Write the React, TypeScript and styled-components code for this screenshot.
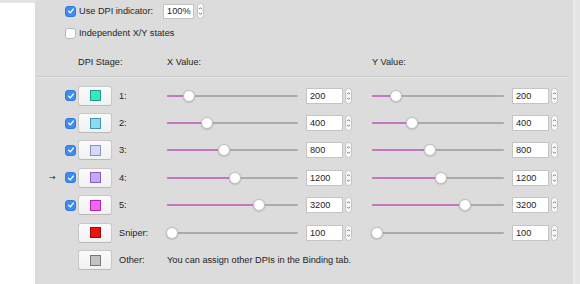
import React from 'react';
import styled, { createGlobalStyle } from 'styled-components';

interface IStage {
  id: string;
  label: string;
  color: string;
  border: string;
  x: number;
  y: number;
  xKnob: number;
  yKnob: number;
  enabled?: boolean;
  current?: boolean;
}

const stages: IStage[] = [
  { id: 's1', label: '1:', color: '#36e8bd', border: '#1f9c7c', x: 200, y: 200, xKnob: 22, yKnob: 24, enabled: true },
  { id: 's2', label: '2:', color: '#88dcf5', border: '#4a93ad', x: 400, y: 400, xKnob: 40, yKnob: 40, enabled: true },
  { id: 's3', label: '3:', color: '#d5d7fb', border: '#8b8fbd', x: 800, y: 800, xKnob: 57, yKnob: 58, enabled: true },
  { id: 's4', label: '4:', color: '#c8a6f8', border: '#8460b9', x: 1200, y: 1200, xKnob: 68, yKnob: 69, enabled: true, current: true },
  { id: 's5', label: '5:', color: '#f763f7', border: '#a82aa8', x: 3200, y: 3200, xKnob: 92, yKnob: 93, enabled: true },
];

const GlobalStyle = createGlobalStyle`
  html, body {
    margin: 0;
    padding: 0;
  }
  body {
    background: #e5e5e5;
    color: #242424;
    font-family: "Liberation Sans", Arial, sans-serif;
    font-size: 9.2px;
  }
`;

const Window = styled.div`
  display: flex;
  width: 580px;
  height: 284px;
  overflow: hidden;
`;

const Sidebar = styled.div`
  width: 35px;
  background: #fff;
  border-top: 3px solid #e3e3e3;
  box-sizing: border-box;
`;

const Panel = styled.div`
  flex: 1;
  background: #dcdcdc;
  display: flex;
  flex-direction: column;
`;

const Edge = styled.div`
  width: 5px;
  background: #e4e4e4;
  border-left: 2px solid #e9e9e9;
`;

const OptionRow = styled.div`
  display: flex;
  align-items: center;
  height: 22px;
  padding-left: 30px;
  gap: 3px;
`;

const Check = styled.span<{ $on?: boolean }>`
  width: 11px;
  height: 11px;
  box-sizing: border-box;
  border-radius: 3px;
  display: inline-flex;
  align-items: center;
  justify-content: center;
  background: ${p => (p.$on ? '#3d8bf5' : '#fff')};
  border: 1px solid ${p => (p.$on ? '#3179e0' : '#b9b9b9')};
`;

const PercentBox = styled.span`
  margin-left: 7px;
  width: 31px;
  height: 15px;
  box-sizing: border-box;
  background: #fff;
  border: 1px solid #c4c4c4;
  padding-left: 3px;
  display: inline-flex;
  align-items: center;
`;

const StageGrid = styled.div<{ $height?: number }>`
  display: grid;
  grid-template-columns: 17px 13px 41px 48px 139px 39px 27px 140px 39px 7px;
  align-items: center;
  height: ${p => p.$height || 27.4}px;
  padding-left: 13px;
`;

const HeaderRow = styled(StageGrid)`
  margin-top: 7px;
`;

const Separator = styled.div`
  height: 1px;
  background: #c9c9c9;
  border-bottom: 1px solid #e8e8e8;
  margin: 3px 5px 4px 2px;
`;

const HeaderCell = styled.span<{ $span?: number }>`
  grid-column: span ${p => p.$span || 1};
`;

const Arrow = styled.span`
  padding-left: 1px;
  font-family: "DejaVu Sans", sans-serif;
  font-size: 8px;
`;

const SwatchButton = styled.span`
  width: 34px;
  height: 20px;
  box-sizing: border-box;
  border-radius: 3px;
  border: 1px solid #c8c8c8;
  border-bottom-color: #b9b9b9;
  background: linear-gradient(#fbfbfb, #f1f1f1);
  display: flex;
  align-items: center;
  justify-content: center;
`;

const Swatch = styled.span<{ $color: string; $border: string }>`
  width: 11px;
  height: 11px;
  box-sizing: border-box;
  background: ${p => p.$color};
  border: 1px solid ${p => p.$border};
`;

const Track = styled.div<{ $width: number }>`
  position: relative;
  width: ${p => p.$width}px;
  height: 2px;
  border-radius: 1px;
  background: #ababab;
`;

const Fill = styled.div`
  position: absolute;
  left: 0;
  top: 0;
  bottom: 0;
  border-radius: 1px;
  background: #c674be;
`;

const Knob = styled.div`
  position: absolute;
  top: -5px;
  width: 12px;
  height: 12px;
  margin-left: -6px;
  box-sizing: border-box;
  border-radius: 50%;
  background: #fff;
  border: 0.5px solid #c2c2c2;
  box-shadow: 0 0.5px 1.5px rgba(0, 0, 0, 0.25);
`;

const NumberBox = styled.span`
  width: 37px;
  height: 16px;
  box-sizing: border-box;
  background: #fff;
  border: 1px solid #c4c4c4;
  padding-left: 3px;
  display: flex;
  align-items: center;
`;

const StepperBox = styled.span`
  display: inline-flex;
  width: 7px;
  height: 16px;
  box-sizing: border-box;
  border: 1px solid #c4c4c4;
  border-radius: 3.5px;
  background: #fafafa;
  align-items: center;
  justify-content: center;
`;

const Note = styled.span`
  grid-column: 5 / -1;
`;

function Tick() {
  return (
    <svg width="8" height="8" viewBox="0 0 8 8">
      <path d="M1.6 4.2 L3.3 5.9 L6.4 2" fill="none" stroke="#fff" strokeWidth="1.3" strokeLinecap="round" strokeLinejoin="round" />
    </svg>
  );
}

function Stepper({ className }: { className?: string }) {
  return (
    <StepperBox className={className}>
      <svg width="5" height="12" viewBox="0 0 5 12">
        <path d="M1 4.2 L2.5 2.7 L4 4.2" fill="none" stroke="#555" strokeWidth="0.8" />
        <path d="M1 7.8 L2.5 9.3 L4 7.8" fill="none" stroke="#555" strokeWidth="0.8" />
      </svg>
    </StepperBox>
  );
}

function Slider({ width, knob, fill }: { width: number; knob: number; fill: boolean }) {
  return (
    <Track $width={width}>
      {fill && <Fill style={{ width: knob }} />}
      <Knob style={{ left: knob }} />
    </Track>
  );
}

function App() {
  return (
    <Window>
      <GlobalStyle />
      <Sidebar />
      <Panel>
        <OptionRow>
          <Check $on><Tick /></Check>
          <span>Use DPI indicator:</span>
          <PercentBox>100%</PercentBox>
          <Stepper />
        </OptionRow>
        <OptionRow>
          <Check />
          <span>Independent X/Y states</span>
        </OptionRow>

        <HeaderRow $height={22}>
          <HeaderCell $span={2} />
          <HeaderCell $span={2}>DPI Stage:</HeaderCell>
          <HeaderCell $span={3}>X Value:</HeaderCell>
          <HeaderCell $span={3}>Y Value:</HeaderCell>
        </HeaderRow>
        <Separator />

        {stages.map(stage => (
          <StageGrid key={stage.id}>
            <Arrow>{stage.current ? '→' : ''}</Arrow>
            <Check $on={stage.enabled}>{stage.enabled && <Tick />}</Check>
            <SwatchButton><Swatch $color={stage.color} $border={stage.border} /></SwatchButton>
            <span>{stage.label}</span>
            <Slider width={131} knob={stage.xKnob} fill />
            <NumberBox>{stage.x}</NumberBox>
            <Stepper />
            <Slider width={132} knob={stage.yKnob} fill />
            <NumberBox>{stage.y}</NumberBox>
            <Stepper />
          </StageGrid>
        ))}

        <StageGrid>
          <span />
          <span />
          <SwatchButton><Swatch $color="#ee1212" $border="#9e0a0a" /></SwatchButton>
          <span>Sniper:</span>
          <Slider width={131} knob={5} fill={false} />
          <NumberBox>100</NumberBox>
          <Stepper />
          <Slider width={132} knob={5} fill={false} />
          <NumberBox>100</NumberBox>
          <Stepper />
        </StageGrid>

        <StageGrid>
          <span />
          <span />
          <SwatchButton><Swatch $color="#c3c3c3" $border="#777" /></SwatchButton>
          <span>Other:</span>
          <Note>You can assign other DPIs in the Binding tab.</Note>
        </StageGrid>
      </Panel>
      <Edge />
    </Window>
  );
}

export default App;
